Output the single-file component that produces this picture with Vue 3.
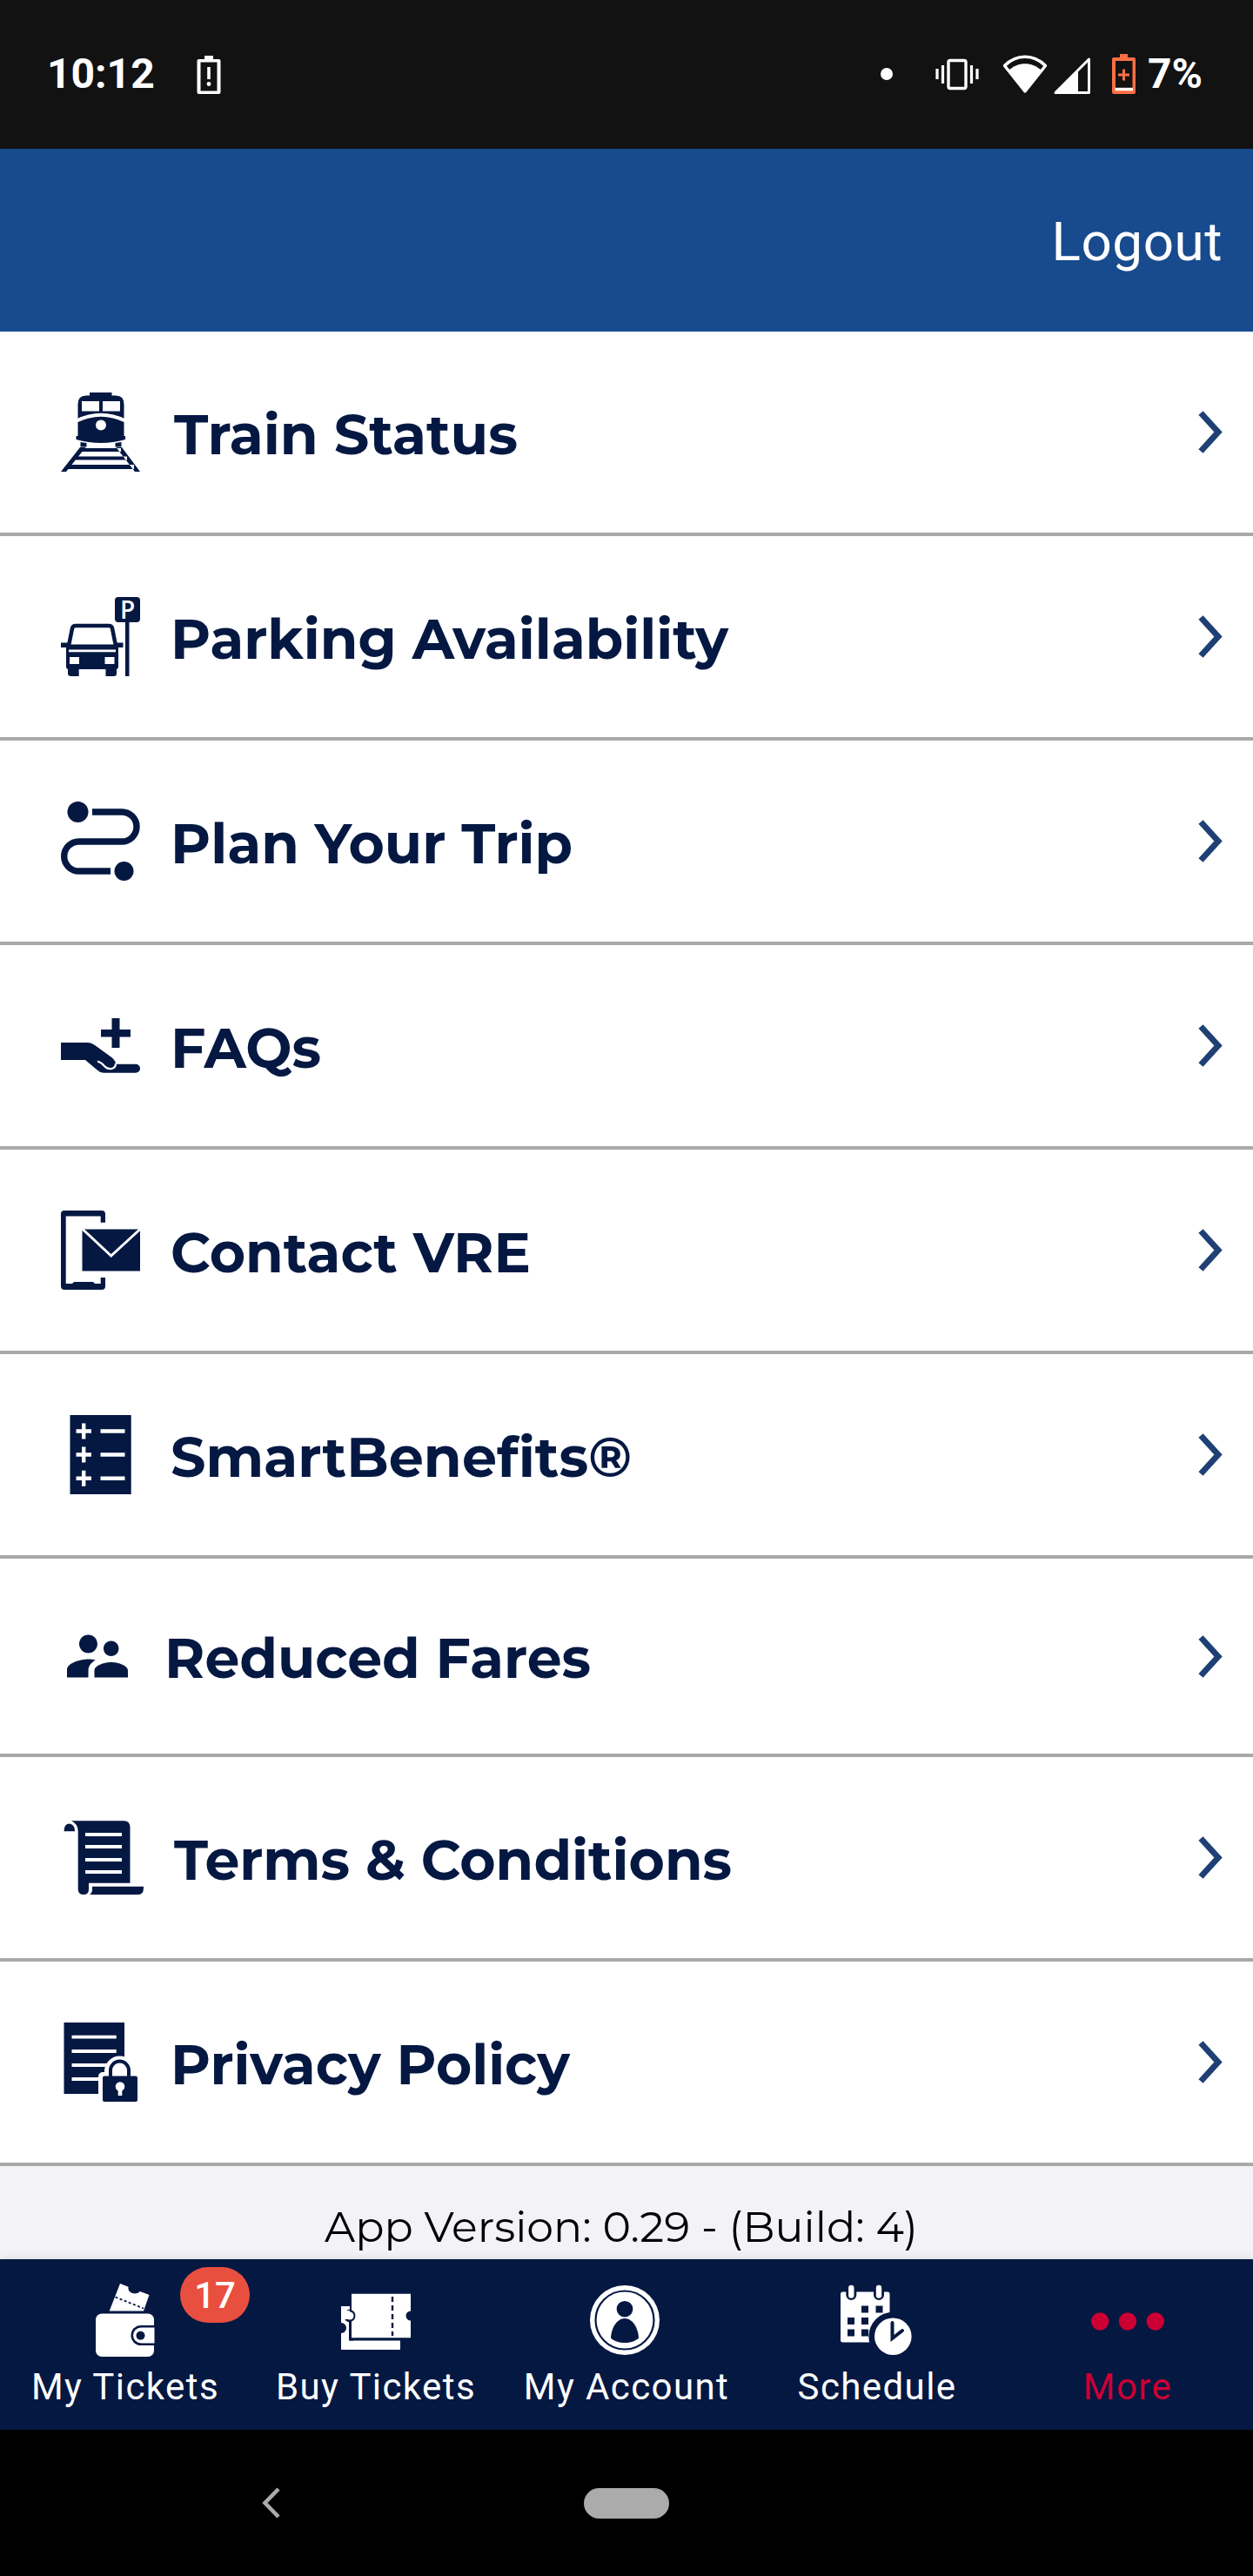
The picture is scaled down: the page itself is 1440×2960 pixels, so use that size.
<template>
  <div class="screen">
    <div class="status-bar">
      <span class="time">10:12</span>
      <svg class="battery-alert" width="28" height="46" viewBox="0 0 28 46">
        <path fill="#fff" fill-rule="evenodd" d="M9 2h10v4h6.500q2 0 2 2v36q0 2-2 2h-23q-2 0-2-2v-36q0-2 2-2H9zM4.500 9.500v33h19v-33z" />
        <path fill="#fff" d="M12.200 15h3.600v14h-3.600z" />
        <circle cx="14" cy="34.500" r="2.400" fill="#fff" />
      </svg>
      <div class="status-right">
        <span class="dot"></span>
        <svg class="vibrate" width="50" height="46" viewBox="0 0 50 46">
          <rect x="15" y="7.500" width="20" height="32" rx="2" fill="none" stroke="#fff" stroke-width="3.400" />
          <path d="M2 17v12M8.500 13v21M41.500 13v21M48 17v12" stroke="#fff" stroke-width="3.200" />
        </svg>
        <svg class="wifi" width="52" height="46" viewBox="0 0 52 46">
          <path d="M2.500 13.500C16-.2 36-.2 49.500 13.500L26 43z" fill="none" stroke="#fff" stroke-width="3.400" stroke-linejoin="round" />
          <path d="M7 19C18 8.500 34 8.500 45 19L26 43z" fill="#fff" />
        </svg>
        <svg class="signal" width="42" height="46" viewBox="0 0 42 46">
          <path d="M2 44.500L40.500 6v38.500z" fill="none" stroke="#fff" stroke-width="3" stroke-linejoin="round" />
          <path d="M2 44.500L28 18v26.500z" fill="#fff" />
        </svg>
        <svg class="battery" width="28" height="46" viewBox="0 0 28 46">
          <path fill="#f96f44" fill-rule="evenodd" d="M9 0h9v4h7q2 0 2 2v38q0 2-2 2H2q-2 0-2-2V6q0-2 2-2h7zM4 8v34h19.500V8z" />
          <path d="M7 24h13M13.500 17.500v13" stroke="#f96f44" stroke-width="3" />
          <path d="M3.500 40.500h20.500" stroke="#fff" stroke-width="3.400" />
        </svg>
        <span class="percent">7%</span>
      </div>
    </div>

    <header class="header">
      <a class="logout">Logout</a>
    </header>

    <ul class="menu">
      <li v-for="item in items" :key="item.icon" class="row" :class="{ short: item.icon === 'people' }">
        <svg class="row-icon" :viewBox="item.icon === 'people' ? '0 0 24 24' : '0 0 92 92'">
          <template v-if="item.icon === 'train'">
            <path d="M33 0h25.500v3.500H63q9.500 0 9.500 10V50h1.500v4Q60 58 46 58T17.500 54v-4h2V13.500q0-10 9.500-10h4z" />
            <path class="white" d="M24 10h20v11.500H24zM48 10h20v11.500H48z" />
            <path class="line" d="M18 32.500Q46 19 74 32.500" stroke-width="3.800" />
            <circle class="white" cx="46" cy="37.500" r="6" />
            <path d="M22.500 57l7 1v4.500h-7zM69.500 57l-7 1v4.500h7zM22 63h6.500L6 91H0zM70 63h-6.500L85 91h6zM23 64h46v4H23zM16 73.500h60v4H16zM7 83h77v5H7z" />
          </template>
          <template v-else-if="item.icon === 'parking'">
            <rect x="62" y="0" width="29" height="29" rx="4" />
            <text class="sign" x="76.500" y="24.500">P</text>
            <path d="M74 28h4.500v63H74zM0 52.500h8V58H0zM64 52.500h7.500V58H64zM8 81h12.700v10h-9Q8 91 8 88zM51.500 81H64v7q0 3-3 3h-9.500z" />
            <path d="M6 55h60v25q0 3-3 3H9q-3 0-3-3z" />
            <path d="M9 56l4-20q.6-3 4-3h38q3.400 0 4 3l4 20" fill="#fff" stroke="#041842" stroke-width="4.500" />
            <path d="M7 54.500h58v4H7z" />
            <path class="white" d="M9 60.500h54v2.700H9zM10 69h11v8H10zM50.500 69h11v8h-11z" />
          </template>
          <template v-else-if="item.icon === 'route'">
            <circle cx="19.500" cy="12" r="12" />
            <circle cx="72.500" cy="80" r="11" />
            <path class="stroke" d="M36 12h34a17 17 0 0 1 0 34H20.700a17 17 0 0 0 0 34H57" stroke-width="7.400" />
          </template>
          <template v-else-if="item.icon === 'hand'">
            <path d="M58.500 14h9v13H80v8.500H67.500V48h-9V35.500H46V27h12.500z" />
            <path d="M0 42h31q4 0 8 3l20 14.500q4 4 4 7.200h23a5 5 0 0 1 0 10H49q-4 0-7-3L28 62H0z" />
            <path class="line" d="M42 63.500q5 1.500 8 5.500 3.500 4 8.500 3 4.500-1.200 4.500-6" stroke-width="2.200" />
          </template>
          <template v-else-if="item.icon === 'contact'">
            <path d="M4 0h43q4 0 4 4v9.700h-5.300V6.500h-40V84H13l2-2h22l2 2h6.700v-7H51v10q0 4-4 4H4q-4 0-4-4V4q0-4 4-4z" />
            <path d="M24.500 21.500H91v48H24.500z" />
            <path class="line" d="M24 20.500L57.700 52 92 20.500" stroke-width="3" />
          </template>
          <template v-else-if="item.icon === 'benefits'">
            <path d="M10.500 0h70.200v91H10.500z" />
            <path class="line" d="M17.500 18.500H35M26.200 9.500v18M45.500 18.500h28M17.500 45.500H35M26.200 36.500v18M45.500 45.500h28M17.500 72.700H35M26.200 63.700v18M45.500 72.700h28" stroke-width="4.400" />
          </template>
          <path v-else-if="item.icon === 'people'" d="M16.500 12c1.380 0 2.490-1.120 2.490-2.500S17.880 7 16.500 7C15.120 7 14 8.120 14 9.500s1.120 2.500 2.500 2.500zM9 11c1.660 0 2.990-1.340 2.990-3S10.660 5 9 5C7.340 5 6 6.340 6 8s1.340 3 3 3zm7.500 3c-1.830 0-5.500.92-5.500 2.750V19h11v-2.250c0-1.830-3.670-2.750-5.500-2.750zM9 13c-2.330 0-7 1.170-7 3.500V19h7v-2.250c0-.85.33-2.340 2.370-3.470C10.500 13.100 9.660 13 9 13z" />
          <template v-else-if="item.icon === 'terms'">
            <path d="M12 3.300h60.500q7 0 7 8v63.500H32V82q0 6-6 6t-6.300-6V15q0-8-7.700-11.700z" />
            <path d="M3.500 15.300Q3.500 6.500 10 6.500q6 1 6 8.800zM36 78.700h59V80q0 8-6 8H33q3-2 3-6z" />
            <path class="line" d="M28 19h42M28 33h42M28 48h42M28 62h42" stroke-width="4" />
          </template>
          <template v-else>
            <path d="M3.500 0H73v82H3.500z" />
            <path class="line" d="M12.500 16.700h51.200M12.500 33h51.200M12.500 49h42M12.500 65H46" stroke-width="3.800" />
            <path d="M48 62h7v-6a12.500 12.500 0 0 1 25 0v6h8v29H48z" fill="#fff" stroke="#fff" stroke-width="10" stroke-linejoin="round" />
            <rect x="48" y="61.500" width="40" height="29.500" rx="2" />
            <path class="stroke" d="M57 63v-8a10.500 10.500 0 0 1 21 0v8" stroke-width="4" />
            <circle class="white" cx="68" cy="73.500" r="5.300" />
            <path class="white" d="M65.700 75h4.600v9h-4.600z" />
          </template>
        </svg>
        <svg class="label" :width="item.width" height="64">
          <text :x="item.x" y="56.500" :textLength="item.width" lengthAdjust="spacingAndGlyphs">{{ item.label }}</text>
        </svg>
        <svg class="chevron" width="28" height="49" viewBox="0 0 28 49">
          <path d="M3 2.500l20 22-20 22" />
        </svg>
      </li>
    </ul>

    <div class="version">
      <svg width="682" height="50">
        <text x="0" y="37" textLength="682" lengthAdjust="spacingAndGlyphs">App Version: 0.29 - (Build: 4)</text>
      </svg>
    </div>

    <nav class="tabs">
      <a v-for="tab in tabs" :key="tab" class="tab" :class="{ active: tab === activeTab }">
        <svg class="tab-icon" viewBox="0 0 84 84">
          <template v-if="tab === 'My Tickets'">
            <path d="M36 0l9.500 3.700q-1 5 4.500 7.300 6 1.500 9-2L69.500 13 63 31.500H23.700z" />
            <path d="M30.500 15.500L63 28.500" stroke="#041842" stroke-width="1.800" stroke-dasharray="3 2.500" />
            <rect x="8" y="34.500" width="67" height="49.500" rx="7" />
            <path class="navy" d="M76 48H60a11.500 11.500 0 0 0 0 23h16z" />
            <path d="M75.500 50.500H60a9 9 0 0 0 0 18h15.500z" />
            <circle class="navy" cx="59.500" cy="59.700" r="5" />
          </template>
          <template v-else-if="tab === 'Buy Tickets'">
            <path d="M2 26h10v50H2zM2 65.500h68V76H2z" />
            <circle class="navy" cx="2" cy="51" r="6" />
            <path class="navy" d="M11 40h5v25.500h-5z" />
            <circle class="navy" cx="12.500" cy="37" r="7.500" />
            <path d="M2 31h10v10H2z" />
            <circle cx="12" cy="37" r="4.500" />
            <path d="M14 11.700h68v19.800a5.500 5.500 0 0 0 0 11v19.800H14V43.500a7 7 0 0 0 0-13z" />
            <path d="M61 15v45" stroke="#041842" stroke-width="2.400" stroke-dasharray="6 4" />
          </template>
          <template v-else-if="tab === 'My Account'">
            <circle cx="40" cy="42" r="40" />
            <circle cx="40" cy="42" r="33.500" fill="none" stroke="#041842" stroke-width="2.200" />
            <circle class="navy" cx="40" cy="29.200" r="9.300" />
            <path class="navy" d="M40 40c-9 0-15.500 11-16 22.500 4 4 10 5.500 16 5.500s12-1.500 16-5.500C55.500 51 49 40 40 40z" />
          </template>
          <template v-else-if="tab === 'Schedule'">
            <rect x="0" y="9.500" width="56.500" height="58" rx="2.500" />
            <path d="M12.300 5v8M44 5v8" stroke="#041842" stroke-width="12" stroke-linecap="round" />
            <path d="M12.300 5v8.500M44 5v8.500" stroke="#fff" stroke-width="6.400" stroke-linecap="round" />
            <path class="navy" d="M24 25.500h8v8h-8zM40.500 25.500h8v8h-8zM8 39h8v8H8zM24 39h8v8h-8zM8 52.500h8v8H8zM24 52.500h8v8h-8z" />
            <circle class="navy" cx="60.300" cy="60.700" r="28" />
            <circle cx="60.300" cy="60.700" r="21.300" />
            <path d="M59.500 45v18l11.500-9" fill="none" stroke="#041842" stroke-width="4" stroke-linecap="round" />
          </template>
          <template v-else>
            <circle cx="10.200" cy="43.500" r="10.200" />
            <circle cx="42" cy="43.500" r="10.200" />
            <circle cx="73.800" cy="43.500" r="10.200" />
          </template>
        </svg>
        <span class="tab-label">{{ tab }}</span>
        <span v-if="tab === 'My Tickets'" class="badge">{{ ticketCount }}</span>
      </a>
    </nav>

    <div class="system-nav">
      <svg width="21" height="36" viewBox="0 0 21 36">
        <path d="M19 2L3.500 18 19 34" fill="none" stroke="#ababab" stroke-width="4.600" />
      </svg>
      <span class="pill"></span>
    </div>
  </div>
</template>

<script setup>
import { ref } from "vue";

// width is the drawn length of the label, x its side bearing
const items = [
  { icon: "train", label: "Train Status", width: 395, x: 3 },
  { icon: "parking", label: "Parking Availability", width: 641, x: -1 },
  { icon: "route", label: "Plan Your Trip", width: 462, x: -1 },
  { icon: "hand", label: "FAQs", width: 173, x: -1 },
  { icon: "contact", label: "Contact VRE", width: 414, x: -1 },
  { icon: "benefits", label: "SmartBenefits®", width: 530, x: -1 },
  { icon: "people", label: "Reduced Fares", width: 490, x: 0 },
  { icon: "terms", label: "Terms & Conditions", width: 641, x: 3 },
  { icon: "privacy", label: "Privacy Policy", width: 459, x: -1 }
];

const tabs = ["My Tickets", "Buy Tickets", "My Account", "Schedule", "More"];
const activeTab = ref("More");
const ticketCount = ref(17);
</script>

<style>
body {
  margin: 0;
  background: #000;
}
</style>

<style scoped>
.screen {
  width: 1440px;
  height: 2960px;
  display: flex;
  flex-direction: column;
  font-family: Roboto, sans-serif;
  overflow: hidden;
}

svg {
  display: block;
  flex-shrink: 0;
}

.status-bar {
  box-sizing: border-box;
  height: 171px;
  padding: 0 56px 1px 54px;
  display: flex;
  align-items: center;
  background: #121212;
  color: #fff;
  font-size: 48px;
  font-weight: 700;
}

.time {
  width: 172px;
  padding-bottom: 2px;
}

.status-right {
  margin-left: auto;
  display: flex;
  align-items: center;
}

.dot {
  width: 14px;
  height: 14px;
  border-radius: 50%;
  background: #fff;
}

.vibrate {
  margin-left: 49px;
}

.wifi {
  margin-left: 27px;
}

.signal {
  margin-left: 7px;
}

.battery {
  margin-left: 25px;
}

.percent {
  width: 65px;
  margin-left: 13px;
  padding-bottom: 2px;
}

.header {
  height: 210px;
  display: flex;
  align-items: center;
  justify-content: flex-end;
  padding-right: 35px;
  box-sizing: border-box;
  background: #184a8e;
}

.logout {
  color: #fff;
  font-size: 62px;
  letter-spacing: 0.5px;
  padding-top: 3px;
}

.menu {
  list-style: none;
  margin: 0;
  padding: 0;
  background: #fff;
}

.row {
  box-sizing: border-box;
  height: 235px;
  padding: 0 35px 0 70px;
  display: flex;
  align-items: center;
  border-bottom: 4px solid #a9a9a9;
}

.row.short {
  height: 228px;
}

.row-icon {
  width: 92px;
  height: 92px;
  overflow: visible;
  fill: #041842;
}

.short .row-icon {
  width: 84px;
  height: 84px;
}

.row-icon .white {
  fill: #fff;
}

.row-icon .line {
  fill: none;
  stroke: #fff;
}

.row-icon .stroke {
  fill: none;
  stroke: #041842;
}

.row-icon .sign {
  fill: #fff;
  font-family: "Open Sans", sans-serif;
  font-size: 28px;
  font-weight: 600;
  text-anchor: middle;
}

.label {
  margin-left: 35px;
  overflow: visible;
  fill: #041842;
  font-family: Montserrat, Inter, sans-serif;
  font-size: 64px;
  font-weight: 700;
}

.chevron {
  margin-left: auto;
}

.chevron path {
  fill: none;
  stroke: #1e4074;
  stroke-width: 7;
}

.version {
  height: 107px;
  box-sizing: border-box;
  padding: 50px 0 0 373px;
  background: #f2f2f7;
  font-family: Montserrat, Inter, sans-serif;
  font-size: 48px;
  font-weight: 400;
}

.version svg {
  overflow: visible;
}

.tabs {
  position: relative;
  height: 196px;
  display: grid;
  grid-template-columns: repeat(5, 1fr);
  background: #041842;
  box-shadow: 0 0 10px rgba(0, 0, 0, 0.12);
}

.tab {
  position: relative;
  padding-top: 28px;
  display: flex;
  flex-direction: column;
  align-items: center;
  color: #fff;
}

.tab.active {
  color: #cc0033;
}

.tab-icon {
  width: 84px;
  height: 84px;
  fill: currentColor;
}

.tab-icon .navy {
  fill: #041842;
}

.tab-label {
  margin-top: 10px;
  font-size: 42px;
  line-height: 50px;
  letter-spacing: 1.4px;
  white-space: nowrap;
}

.badge {
  position: absolute;
  top: 9px;
  left: 207px;
  width: 80px;
  height: 64px;
  border-radius: 32px;
  background: #e94f3f;
  font-size: 42px;
  font-weight: 500;
  line-height: 66px;
  text-align: center;
}

.system-nav {
  height: 168px;
  display: flex;
  align-items: center;
  gap: 349px;
  padding-left: 301px;
  background: #000;
}

.pill {
  width: 98px;
  height: 35px;
  border-radius: 18px;
  background: #ababab;
}
</style>
